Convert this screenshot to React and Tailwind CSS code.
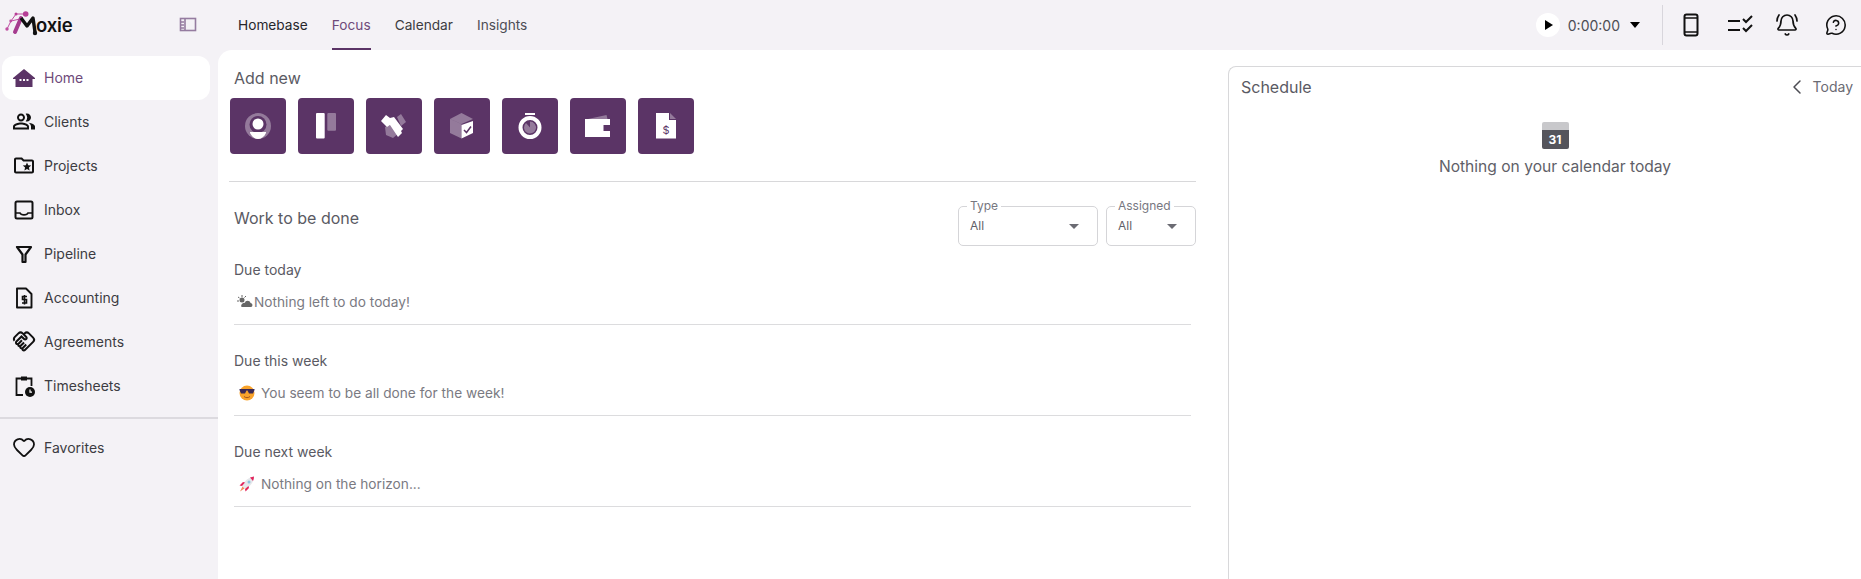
import { ChevronLeft, Heart, BellRing, MessageCircleQuestion } from "lucide-react";
import { MdOutlinePeopleAlt, MdOutlineFolderSpecial, MdOutlineHandshake } from "react-icons/md";

const HomeIcon = () => (
  <svg width="24" height="24" viewBox="0 0 24 24">
    <path d="M12 3 L23 12 V13 H20.5 V21 H3.5 V13 H1 V12 Z" fill="#5b3466" />
    <rect x="7.5" y="13" width="2" height="2" fill="#fff" />
    <rect x="11" y="13" width="2" height="2" fill="#fff" />
    <rect x="14.5" y="13" width="2" height="2" fill="#fff" />
  </svg>
);

const InboxIcon = () => (
  <svg width="24" height="24" viewBox="0 0 24 24" fill="none" stroke="#111" strokeWidth="2">
    <rect x="3.5" y="3.5" width="17" height="17" rx="1.5" />
    <path d="M3.5 15 H8 C9 17.5 15 17.5 16 15 H20.5" strokeWidth="1.7" />
  </svg>
);

const FilterIcon = () => (
  <svg width="24" height="24" viewBox="0 0 24 24" fill="none" stroke="#111" strokeWidth="2.2">
    <path d="M5 5 H19 L13.5 12.5 V20 H10.5 V12.5 Z" strokeLinejoin="round" />
  </svg>
);

const DocDollarIcon = () => (
  <svg width="24" height="24" viewBox="0 0 24 24" fill="none" stroke="#111" strokeWidth="1.9">
    <path d="M5 2.5 H14 L19.5 8 V21.5 H5 Z" strokeLinejoin="round" />
    <path d="M15 10.5 H10.5 V13.5 H14.5 V17 H10 M12.5 9 V18.5" strokeWidth="1.6" />
  </svg>
);

const ClipboardClockIcon = () => (
  <svg width="24" height="24" viewBox="0 0 24 24" fill="none" stroke="#111" strokeWidth="1.8">
    <path d="M9 4.5 H4.5 V21 H11 M15 4.5 H19.5 V12" />
    <rect x="9" y="2.5" width="6" height="4" fill="#111" stroke="none" />
    <circle cx="18" cy="18" r="5" fill="#111" stroke="none" />
    <path d="M18 15.5 V18.2 H20" stroke="#fff" strokeWidth="1.2" />
  </svg>
);

const PanelIcon = () => (
  <svg width="18" height="16" viewBox="0 0 18 16" fill="none" stroke="#957ca0" strokeWidth="1.6">
    <rect x="1.5" y="1.5" width="15" height="12" />
    <path d="M6 1.5 V13.5 M2 5 H5 M2 8 H5 M2 11 H5" />
  </svg>
);

const PhoneIcon = () => (
  <svg width="16" height="24" viewBox="0 0 16 24" fill="none" stroke="#111" strokeWidth="2">
    <rect x="1.5" y="1.5" width="13" height="21" rx="2" />
    <path d="M2 5 H14 M2 19 H14" strokeWidth="1.4" />
  </svg>
);

const ChecklistIcon = () => (
  <svg width="26" height="20" viewBox="0 0 26 20" fill="none" stroke="#111" strokeWidth="2">
    <path d="M1 6 H13 M1 15 H13 M16 4 L19 7 L25 1 M16 13 L19 16 L25 10" />
  </svg>
);

const PersonTile = () => (
  <svg width="26" height="26" viewBox="0 0 26 26">
    <circle cx="13" cy="13" r="13" fill="#fff" opacity="0.35" />
    <circle cx="13" cy="11.5" r="8.5" fill="#5b3466" />
    <circle cx="13" cy="11" r="5.5" fill="#fff" />
    <path d="M5 19 H21 V20 C19 24 16 26 13 26 C10 26 7 24 5 20 Z" fill="#fff" />
  </svg>
);

const BoardTile = () => (
  <svg width="20" height="26" viewBox="0 0 20 26">
    <rect x="0" y="0" width="8.7" height="25.5" rx="1" fill="#fff" />
    <rect x="11.3" y="0" width="8.7" height="17.7" rx="1" fill="#fff" opacity="0.35" />
  </svg>
);

const HandshakeTile = () => (
  <svg width="26" height="26" viewBox="0 0 26 26">
    <path d="M16 4 L20 1 L25 9 L20 13 Z" fill="#fff" opacity="0.35" />
    <path d="M4 14 L12 11 L18 20 L12 25 L5 22 Z" fill="#fff" opacity="0.35" />
    <path d="M0 8 L5 2 L9 5 L13 4 L22 16 L20 18 L21 20 L17 24 L9 12 L6 14 Z" fill="#fff" />
  </svg>
);

const BoxTile = () => (
  <svg width="24" height="26" viewBox="0 0 24 26">
    <path d="M11.5 0 L23 6 L11.5 11 L0 6 Z" fill="#fff" opacity="0.35" />
    <path d="M0 6 L11.5 11 V25.5 L0 20 Z" fill="#fff" opacity="0.35" />
    <path d="M11.5 25.5 V12 L23 8 V20 Z" fill="#fff" />
    <path d="M14 17 L16.5 19.5 L21 13.5" fill="none" stroke="#5b3466" strokeWidth="1.5" />
  </svg>
);

const TimerTile = () => (
  <svg width="24" height="26" viewBox="0 0 24 26">
    <rect x="7" y="0" width="10" height="2" fill="#fff" />
    <circle cx="12" cy="14.5" r="9.5" fill="none" stroke="#fff" strokeWidth="4" />
    <path d="M12 14.5 V8.5 A6 6 0 1 1 8 10 Z" fill="#fff" opacity="0.35" />
  </svg>
);

const WalletTile = () => (
  <svg width="26" height="24" viewBox="0 0 26 24">
    <path d="M3 5 L21.5 1 L22.5 5 Z" fill="#fff" opacity="0.35" />
    <path d="M0 5 H25 V11 H18.5 V17 H25 V23 H0 Z" fill="#fff" />
  </svg>
);

const InvoiceTile = () => (
  <svg width="20" height="26" viewBox="0 0 20 26">
    <path d="M0 0 H13 V7 H20 V25.5 H0 Z" fill="#fff" />
    <path d="M14 0 L20 6 H14 Z" fill="#fff" opacity="0.35" />
    <text x="10" y="21" textAnchor="middle" fontSize="11" fontFamily="Inter, sans-serif" fill="#5b3466">$</text>
  </svg>
);

const Logo = () => (
  <div className="relative h-[50px] w-[90px]">
    <svg className="absolute left-0 top-0" width="40" height="40" viewBox="0 0 40 40">
      <path d="M7 29 L11 21 L16 14 L26 14 M11 21 L20 19" stroke="#c04ea2" strokeWidth="1" fill="none" />
      <path d="M15 32 L21 18" stroke="#a63c8f" strokeWidth="4" strokeLinecap="round" fill="none" />
      <path d="M21 18 L27 26 L33 18 L35 32" stroke="#111" strokeWidth="3.4" strokeLinejoin="round" fill="none" />
      <circle cx="7" cy="29" r="1.7" fill="#c04ea2" />
      <circle cx="10.7" cy="21" r="1.4" fill="#c04ea2" />
      <circle cx="16" cy="14" r="1.5" fill="#b73e96" />
      <circle cx="25.7" cy="14" r="2.8" fill="#b73e96" />
      <circle cx="35" cy="33" r="2.2" fill="#111" />
    </svg>
    <span className="absolute left-[36px] top-[12px] text-[18.5px] font-semibold leading-[26px] tracking-[-0.2px] text-[#111]">
      oxie
    </span>
  </div>
);

const navItems = [
  { label: "Clients", icon: <MdOutlinePeopleAlt size={25} color="#111" /> },
  { label: "Projects", icon: <MdOutlineFolderSpecial size={25} color="#111" /> },
  { label: "Inbox", icon: <InboxIcon /> },
  { label: "Pipeline", icon: <FilterIcon /> },
  { label: "Accounting", icon: <DocDollarIcon /> },
  { label: "Agreements", icon: <MdOutlineHandshake size={25} color="#111" /> },
  { label: "Timesheets", icon: <ClipboardClockIcon /> },
];

const tiles = [
  <PersonTile key="client" />,
  <BoardTile key="project" />,
  <HandshakeTile key="agreement" />,
  <BoxTile key="deliverable" />,
  <TimerTile key="time" />,
  <WalletTile key="expense" />,
  <InvoiceTile key="invoice" />,
];

const CloudEmoji = () => (
  <svg className="ml-[3px] mr-[1px]" width="16" height="14" viewBox="0 0 16 14">
    <circle cx="5" cy="5" r="2.5" fill="#666" />
    <path d="M5 0 V2 M1 2 L2.5 3 M0 6 H2 M9 1 L7.5 2.5" stroke="#666" strokeWidth="1" />
    <path d="M5 12 H14 C16 12 16 8 13.5 8 C13 5 8 5 8 8 C5 7 3 12 5 12 Z" fill="#666" />
  </svg>
);

const CoolEmoji = () => (
  <svg className="mr-[6px] ml-[5px]" width="16" height="16" viewBox="0 0 16 16">
    <circle cx="8" cy="8" r="7.5" fill="#f9a32b" />
    <path d="M0.5 4 H15.5 V5 L14 8.5 H10 L8.5 5.5 H7.5 L6 8.5 H2 L0.5 5 Z" fill="#3b2a55" />
    <path d="M5 11.5 C6.5 13 9.5 13 11 11.5" stroke="#a5561b" fill="none" strokeWidth="1" />
  </svg>
);

const RocketEmoji = () => (
  <svg className="mr-[6px] ml-[5px]" width="16" height="16" viewBox="0 0 16 16">
    <path d="M3 10 C5 5 10 1 15 0.5 C15 6 11 11 6 13 Z" fill="#e5e7eb" />
    <path d="M11 1.5 C12.5 1 14 0.7 15 0.5 C15 2 14.7 3.5 14 5 Z" fill="#e2245c" />
    <path d="M3 10 L0.5 9.5 L4 6 L6 6.5 Z M6 13 L6.5 15.5 L10 12 L9.5 10 Z" fill="#e2245c" />
    <circle cx="10" cy="6" r="1.5" fill="#8cc4e0" />
    <path d="M3.5 10.5 L5.5 12.5 L1 15.5 Z" fill="#f58a5c" />
  </svg>
);

const sections = [
  { title: "Due today", emoji: <CloudEmoji />, text: "Nothing left to do today!" },
  { title: "Due this week", emoji: <CoolEmoji />, text: "You seem to be all done for the week!" },
  { title: "Due next week", emoji: <RocketEmoji />, text: "Nothing on the horizon..." },
];

const SelectBox = ({ label, width }) => (
  <div className={`relative h-[40px] ${width} rounded-[5px] border border-[#d5d5d8] px-[11px]`}>
    <span className="absolute left-[8px] top-[-8px] bg-white px-[3px] text-[12px] leading-[14px] text-[#77777f]">
      {label}
    </span>
    <div className="flex h-full items-center justify-between text-[12px] text-[#5f5f68]">
      <span>All</span>
      <span className="mr-[7px] h-0 w-0 border-x-[5px] border-t-[5px] border-x-transparent border-t-[#6b6b73]" />
    </div>
  </div>
);

export default function App() {
  return (
    <div className="flex h-[579px] flex-col overflow-hidden bg-[#f4f2f6] font-['Inter',sans-serif] text-[14px]">
      {/* top bar */}
      <header className="flex h-[50px] shrink-0 items-center">
        <div className="flex w-[218px] shrink-0 items-center justify-between pr-[21px]">
          <Logo />
          <PanelIcon />
        </div>
        <nav className="flex h-full items-center pl-[20px] text-[13.7px]">
          <a className="mr-[24px] text-[#26262b]">Homebase</a>
          <a className="relative mr-[24px] flex h-full items-center text-[#6e4a7a]">
            Focus
            <span className="absolute bottom-0 left-0 h-[2px] w-full bg-[#5b3466]" />
          </a>
          <a className="mr-[24px] text-[#3c3c42]">Calendar</a>
          <a className="text-[#4d4d54]">Insights</a>
        </nav>
        <div className="ml-auto flex items-center pr-[14px]">
          <span className="flex h-[24px] w-[24px] items-center justify-center rounded-full bg-white">
            <span className="ml-[2px] h-0 w-0 border-y-[5px] border-l-[8px] border-y-transparent border-l-black" />
          </span>
          <span className="ml-[8px] text-[14px] text-[#4d4d54]">0:00:00</span>
          <span className="ml-[10px] h-0 w-0 border-x-[5px] border-t-[6px] border-x-transparent border-t-black" />
          <span className="ml-[22px] mr-[20px] h-[40px] w-px bg-[#d8d6dc]" />
          <PhoneIcon />
          <span className="ml-[28px]"><ChecklistIcon /></span>
          <span className="ml-[22px]"><BellRing size={24} color="#111" strokeWidth={1.7} /></span>
          <span className="ml-[26px]"><MessageCircleQuestion size={22} color="#111" strokeWidth={1.7} /></span>
        </div>
      </header>

      <div className="flex min-h-0 flex-1">
        {/* sidebar */}
        <aside className="w-[218px] shrink-0 pt-[6px]">
          <div className="ml-[2px] flex h-[44px] w-[208px] items-center gap-[8px] rounded-[12px] bg-white pb-px pl-[10px] text-[#6e4a7a]">
            <HomeIcon />
            Home
          </div>
          {navItems.map((item) => (
            <div key={item.label} className="flex h-[44px] items-center gap-[8px] pb-px pl-[12px] text-[#3c3c42]">
              <span className="flex w-[24px] justify-center">{item.icon}</span>
              {item.label}
            </div>
          ))}
          <div className="mt-[9px] h-[2px] bg-[#dcdadf]" />
          <div className="mt-[6px] flex h-[44px] items-center gap-[8px] pl-[12px] text-[#3c3c42]">
            <Heart size={24} color="#111" strokeWidth={1.8} />
            Favorites
          </div>
        </aside>

        {/* main */}
        <main className="flex min-w-0 flex-1 rounded-tl-[14px] bg-white">
          <section className="w-[978px] shrink-0 pl-[11px] pt-[16px]">
            <h2 className="pl-[5px] text-[16px] leading-[24px] text-[#5a5a63]">Add new</h2>
            <div className="ml-px mt-[8px] flex gap-[12px]">
              {tiles.map((tile) => (
                <div key={tile.key} className="flex h-[56px] w-[56px] items-center justify-center rounded-[4px] bg-[#5b3466]">
                  {tile}
                </div>
              ))}
            </div>
            <div className="mt-[27px] h-px bg-[#d8d8da]" />
            <div className="mt-[24px] flex items-start justify-between pl-[5px]">
              <h2 className="text-[16px] leading-[24px] text-[#5a5a63]">Work to be done</h2>
              <div className="flex gap-[8px]">
                <SelectBox label="Type" width="w-[140px]" />
                <SelectBox label="Assigned" width="w-[90px]" />
              </div>
            </div>
            <div className="mt-[14px] pl-[5px] pr-[5px]">
              {sections.map((s) => (
                <div key={s.title} className="mb-[26px] border-b border-[#dcdcde] pb-[12px]">
                  <div className="h-[20px] text-[14px] leading-[20px] text-[#5a5a63]">{s.title}</div>
                  <div className="mt-[12px] flex h-[20px] items-center text-[13.7px] text-[#7a7a82]">
                    {s.emoji}
                    {s.text}
                  </div>
                </div>
              ))}
            </div>
          </section>

          <section className="ml-[32px] mt-[16px] min-w-0 flex-1 rounded-tl-[8px] border-l border-t border-[#d8d8da] pl-[12px] pr-[8px] pt-[8px]">
            <div className="flex items-center justify-between leading-[24px]">
              <span className="text-[16px] text-[#5a5a63]">Schedule</span>
              <span className="flex items-center gap-[4px] text-[14px] text-[#6b6b73]">
                <ChevronLeft size={24} strokeWidth={1.5} color="#4d4d54" />
                Today
              </span>
            </div>
            <div className="mt-[23px] flex flex-col items-center pl-[16px]">
              <div className="h-[27px] w-[27px] overflow-hidden rounded-[2px]">
                <div className="h-[8px] bg-[#c8c8cb]" />
                <div className="flex h-[19px] items-center justify-center bg-[#55555c] text-[12px] font-bold text-white">31</div>
              </div>
              <div className="mt-[6px] text-[15.6px] leading-[24px] text-[#5f5f68]">Nothing on your calendar today</div>
            </div>
          </section>
        </main>
      </div>
    </div>
  );
}
